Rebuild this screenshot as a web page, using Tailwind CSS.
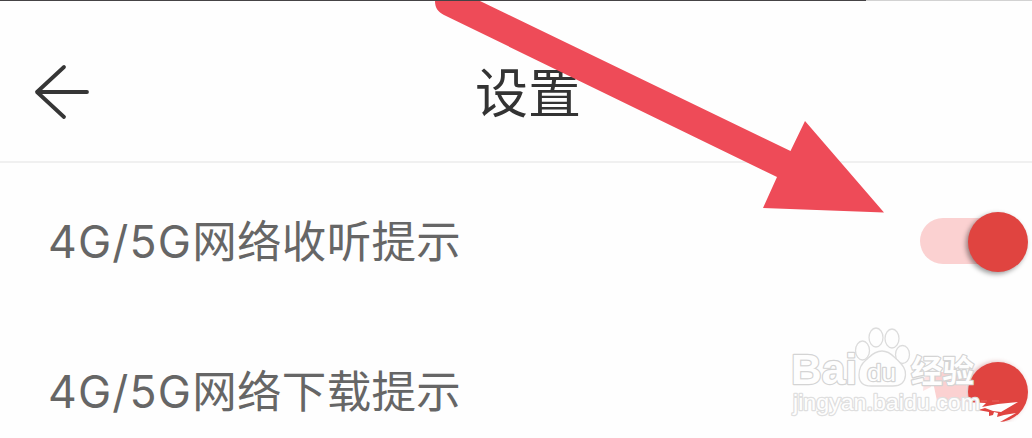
<!DOCTYPE html>
<html lang="zh-CN">
<head>
  <meta charset="UTF-8">
  <meta name="viewport" content="width=device-width,initial-scale=1.0">
  <title>设置</title>
  <script src="https://cdn.jsdelivr.net/npm/@tailwindcss/browser@4"></script>
</head>
<body class="bg-[#fefefe] font-['Inter','Noto_Sans_CJK_SC',sans-serif]">
  <div class="relative w-[1032px] h-[438px] overflow-hidden">

    <!-- Status bar edge -->
    <div class="flex h-px">
      <div class="w-[866px] bg-[#454345]"></div>
      <div class="flex-1 bg-[#d2d2d2]"></div>
    </div>

    <!-- Header -->
    <header class="grid grid-cols-[1fr_auto_1fr] items-center h-[162px] pl-[34px] pr-2 pt-[22px] border-b-2 border-[#f0f0f0]">
      <button aria-label="返回" class="w-14 h-14">
        <svg viewBox="0 0 56 56" class="w-14 h-14" fill="none" stroke="#363636" stroke-width="3.8" stroke-linecap="round" stroke-linejoin="round">
          <path d="M30 3 3 28l27 25M3 28h50"/>
        </svg>
      </button>
      <h1 class="-ml-[2px] pt-[3px] text-[53px] leading-[60px] text-[#333]">设置</h1>
    </header>

    <!-- Settings -->
    <main class="pl-12 pr-1 pt-1">
      <div class="flex items-center justify-between h-[150px]">
        <p class="text-[44.5px] leading-[60px] tracking-[0.3px] text-[#666]"><span class="tracking-[1.2px]">4G/5G</span>网络收听提示</p>
        <div class="flex items-center w-[108px] h-[60px]">
          <div class="w-[90px] h-[46px] -mt-[3px] rounded-full bg-[#fbd1d1]"></div>
          <div class="w-[60px] h-[60px] -ml-[42px] shrink-0 rounded-full bg-[#e04440] shadow-[-2px_2px_5px_rgba(0,0,0,0.4)]"></div>
        </div>
      </div>
      <div class="flex items-center justify-between h-[150px]">
        <p class="text-[44.5px] leading-[60px] tracking-[0.3px] text-[#666]"><span class="tracking-[1.2px]">4G/5G</span>网络下载提示</p>
        <div class="flex items-center w-[108px] h-[60px]">
          <div class="w-[90px] h-[46px]"></div>
          <div class="w-[60px] h-[60px] -ml-[42px] shrink-0 rounded-full bg-[#e04440] shadow-[-2px_0_5px_rgba(150,0,0,0.3)]"></div>
        </div>
      </div>
    </main>

    <!-- Pointer arrow -->
    <svg class="absolute left-0 top-px" width="1032" height="220" viewBox="0 1 1032 220" fill="#ee4b58">
      <path d="M435 1c0 7 3 11 9 14l333 162-14 31 121 4.5L805 121l-14.500 30L480 1z"/>
    </svg>

    <!-- Watermark -->
    <svg class="absolute left-[780px] top-[310px]" width="252" height="128" viewBox="780 310 252 128">
      <path d="M934 372h32v24l3 5h-32l-5-24z" fill="#fbd1d1"/>
      <path d="M924 378l8-5-1 14-8 4z" fill="#fde3e3"/>
      <g fill="#fefefe">
        <path d="M964 402l22 1-4 4 16-3 20-2-17 10-8-1-8-3-10 3-12-3z"/>
        <path d="M978 410l11 2v4l4-1 1-3 4 1-1 4 7-2 12-2-16 9h32v12H956v-28h14z"/>
      </g>
      <g fill="#fefefe" stroke="#dcdcdc" stroke-width="1.300">
        <ellipse cx="862.500" cy="350.500" rx="7" ry="9.500"/>
        <ellipse cx="876" cy="337.500" rx="7" ry="9.500"/>
        <ellipse cx="892" cy="338.500" rx="7" ry="9.500"/>
        <ellipse cx="902.500" cy="354.500" rx="7" ry="9"/>
        <path d="M882 351c-9 0-13 7-16 9-5 4-7 9-7 15 0 8 5 11 12 11h22c8 0 12-4 12.500-11 .5-6-3-10-8-15-4-3-7-9-15.500-9z"/>
      </g>
      <g fill="#fefefe" stroke="#d4d4d4" stroke-width="2.400" paint-order="stroke" stroke-linejoin="round">
        <text x="791" y="384" font-family="Liberation Sans" font-weight="700" font-size="42" textLength="66" lengthAdjust="spacingAndGlyphs">Bai</text>
        <text x="867" y="380.500" font-family="Liberation Sans" font-size="24" textLength="29" lengthAdjust="spacingAndGlyphs">du</text>
        <text x="911" y="382" font-family="Noto Sans CJK SC" font-weight="700" font-size="31" textLength="63" lengthAdjust="spacingAndGlyphs">经验</text>
        <text x="793" y="410" font-family="Liberation Sans" font-size="22" textLength="187" lengthAdjust="spacingAndGlyphs" stroke="#dfdfdf">jingyan.baidu.com</text>
      </g>
      <path d="M981 400h6v2h-6zM992 400h7v2h-7z" fill="#e4534f"/>
    </svg>

  </div>
</body>
</html>
